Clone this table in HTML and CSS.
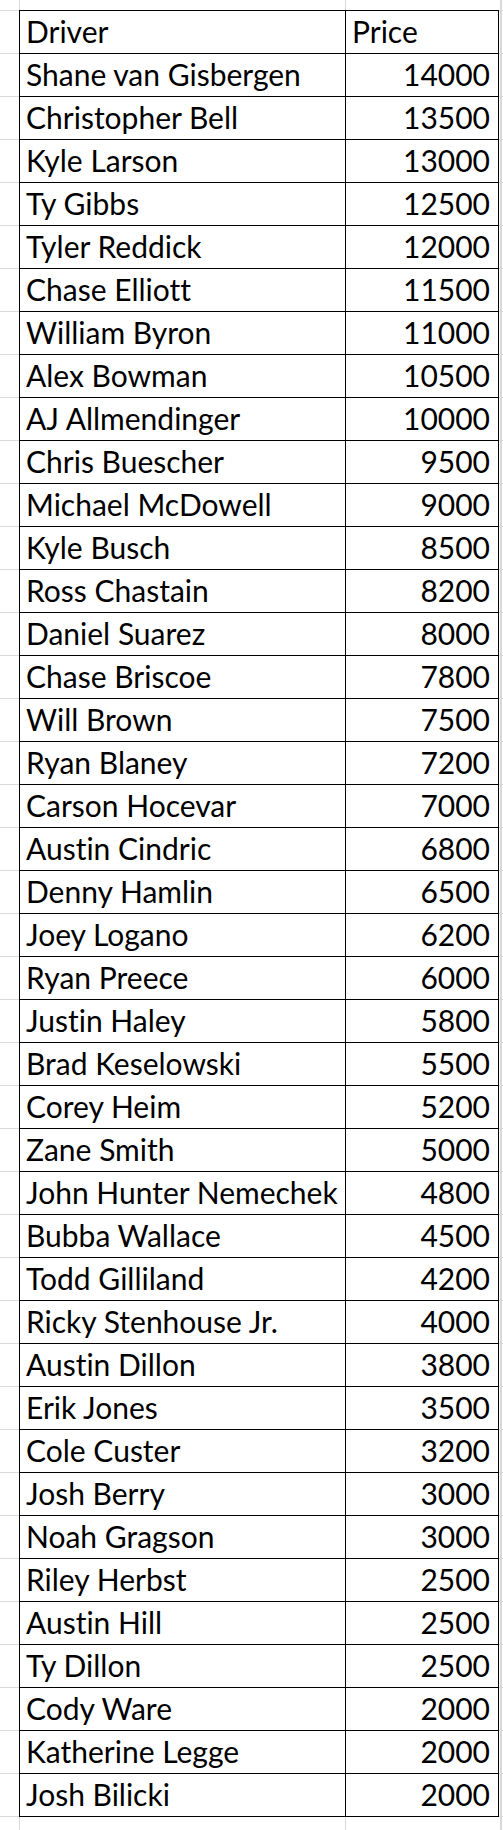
FILE: index.html
```html
<!DOCTYPE html>
<html>
<head>
<meta charset="utf-8">
<link rel="stylesheet" href="styles.css">
</head>
<body>
<div class="sheet">
<table class="data">
<colgroup><col class="c-name"><col class="c-price"></colgroup>
<tr><td>Driver</td><td class="hdr-price">Price</td></tr>
<tr><td>Shane van Gisbergen</td><td class="num">14000</td></tr>
<tr><td>Christopher Bell</td><td class="num">13500</td></tr>
<tr><td>Kyle Larson</td><td class="num">13000</td></tr>
<tr><td>Ty Gibbs</td><td class="num">12500</td></tr>
<tr><td>Tyler Reddick</td><td class="num">12000</td></tr>
<tr><td>Chase Elliott</td><td class="num">11500</td></tr>
<tr><td>William Byron</td><td class="num">11000</td></tr>
<tr><td>Alex Bowman</td><td class="num">10500</td></tr>
<tr><td>AJ Allmendinger</td><td class="num">10000</td></tr>
<tr><td>Chris Buescher</td><td class="num">9500</td></tr>
<tr><td>Michael McDowell</td><td class="num">9000</td></tr>
<tr><td>Kyle Busch</td><td class="num">8500</td></tr>
<tr><td>Ross Chastain</td><td class="num">8200</td></tr>
<tr><td>Daniel Suarez</td><td class="num">8000</td></tr>
<tr><td>Chase Briscoe</td><td class="num">7800</td></tr>
<tr><td>Will Brown</td><td class="num">7500</td></tr>
<tr><td>Ryan Blaney</td><td class="num">7200</td></tr>
<tr><td>Carson Hocevar</td><td class="num">7000</td></tr>
<tr><td>Austin Cindric</td><td class="num">6800</td></tr>
<tr><td>Denny Hamlin</td><td class="num">6500</td></tr>
<tr><td>Joey Logano</td><td class="num">6200</td></tr>
<tr><td>Ryan Preece</td><td class="num">6000</td></tr>
<tr><td>Justin Haley</td><td class="num">5800</td></tr>
<tr><td>Brad Keselowski</td><td class="num">5500</td></tr>
<tr><td>Corey Heim</td><td class="num">5200</td></tr>
<tr><td>Zane Smith</td><td class="num">5000</td></tr>
<tr><td>John Hunter Nemechek</td><td class="num">4800</td></tr>
<tr><td>Bubba Wallace</td><td class="num">4500</td></tr>
<tr><td>Todd Gilliland</td><td class="num">4200</td></tr>
<tr><td>Ricky Stenhouse Jr.</td><td class="num">4000</td></tr>
<tr><td>Austin Dillon</td><td class="num">3800</td></tr>
<tr><td>Erik Jones</td><td class="num">3500</td></tr>
<tr><td>Cole Custer</td><td class="num">3200</td></tr>
<tr><td>Josh Berry</td><td class="num">3000</td></tr>
<tr><td>Noah Gragson</td><td class="num">3000</td></tr>
<tr><td>Riley Herbst</td><td class="num">2500</td></tr>
<tr><td>Austin Hill</td><td class="num">2500</td></tr>
<tr><td>Ty Dillon</td><td class="num">2500</td></tr>
<tr><td>Cody Ware</td><td class="num">2000</td></tr>
<tr><td>Katherine Legge</td><td class="num">2000</td></tr>
<tr><td>Josh Bilicki</td><td class="num">2000</td></tr>
</table>
</div>
</body>
</html>
```
FILE: styles.css
```css
html, body {
  margin: 0;
  padding: 0;
}
body {
  width: 503px;
  height: 1830px;
  overflow: hidden;
  background-color: #ffffff;
  background-image:
    linear-gradient(to right, transparent 19px, #d9d9d9 19px, #d9d9d9 20px, transparent 20px),
    linear-gradient(to right, transparent 345px, #d9d9d9 345px, #d9d9d9 346px, transparent 346px),
    linear-gradient(to right, transparent 500px, #d9d9d9 500px, #d9d9d9 502px, transparent 502px),
    repeating-linear-gradient(to bottom, #d9d9d9 0, #d9d9d9 1px, transparent 1px, transparent 43px);
  background-position: 0 0, 0 0, 0 0, 0 10px;
  background-repeat: no-repeat, no-repeat, no-repeat, repeat-y;
  font-family: "Lato", "Liberation Sans", sans-serif;
  font-variant-ligatures: none;
}
.sheet {
  padding: 10px 0 0 19px;
}
.data {
  border-collapse: collapse;
  table-layout: fixed;
  width: 479px;
  background: #ffffff;
}
.c-name { width: 326px; }
.c-price { width: 153px; }
.data tr {
  height: 43px;
}
.data td {
  border: 1px solid #000000;
  height: 43px;
  padding: 0 8px 0 6px;
  box-sizing: border-box;
  font-size: 30px;
  line-height: 40px;
  color: #000000;
  white-space: nowrap;
  vertical-align: top;
}
.data td.num {
  text-align: right;
}
.data td.hdr-price {
  text-align: left;
}
```
